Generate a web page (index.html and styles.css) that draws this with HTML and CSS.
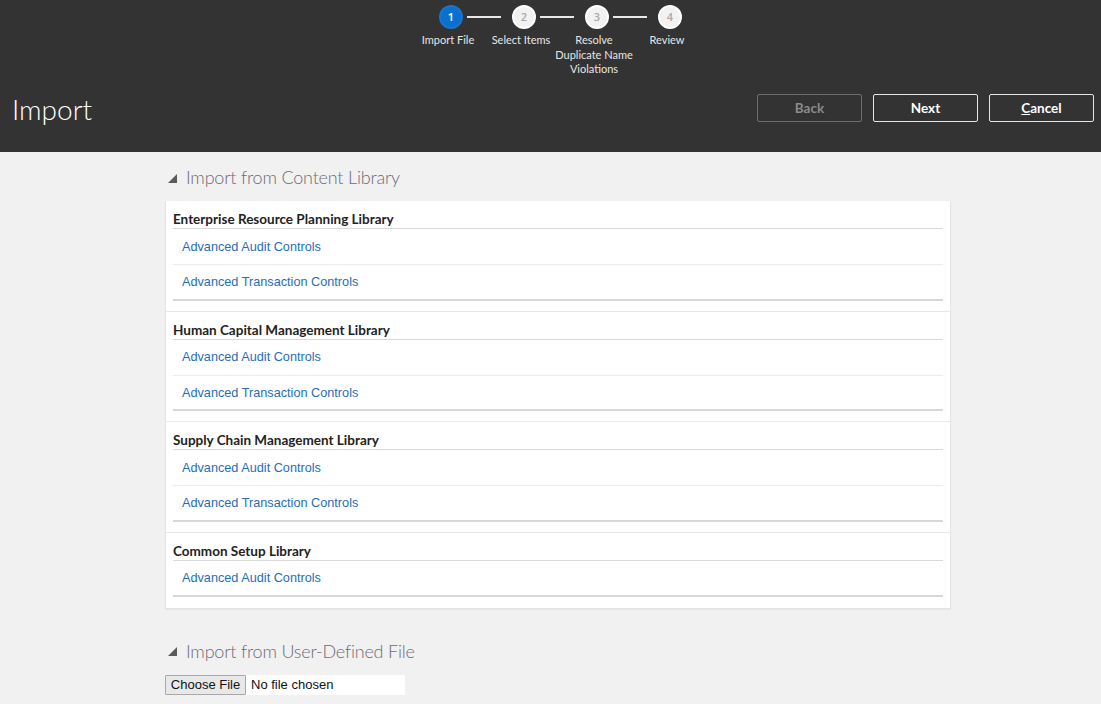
FILE: index.html
```html
<!DOCTYPE html>
<html>
<head>
<meta charset="utf-8">
<link rel="stylesheet" href="styles.css">
</head>
<body>
<header class="header">
  <div class="train">
    <div class="step active"><span class="dot">1</span><span class="label">Import File</span></div>
    <div class="step"><span class="dot">2</span><span class="label">Select Items</span></div>
    <div class="step"><span class="dot">3</span><span class="label">Resolve Duplicate Name Violations</span></div>
    <div class="step last"><span class="dot">4</span><span class="label">Review</span></div>
  </div>
  <div class="title-bar">
    <h1 class="title">Import</h1>
    <div class="actions">
      <button class="btn disabled">Back</button>
      <button class="btn">Next</button>
      <button class="btn"><u>C</u>ancel</button>
    </div>
  </div>
</header>
<main class="content">
  <h2 class="section-title"><span class="tri"></span>Import from Content Library</h2>
  <div class="panel">
    <div class="group">
      <div class="group-title">Enterprise Resource Planning Library</div>
      <div class="row"><a class="link">Advanced Audit Controls</a></div>
      <div class="row"><a class="link">Advanced Transaction Controls</a></div>
    </div>
    <div class="group">
      <div class="group-title">Human Capital Management Library</div>
      <div class="row"><a class="link">Advanced Audit Controls</a></div>
      <div class="row"><a class="link">Advanced Transaction Controls</a></div>
    </div>
    <div class="group">
      <div class="group-title">Supply Chain Management Library</div>
      <div class="row"><a class="link">Advanced Audit Controls</a></div>
      <div class="row"><a class="link">Advanced Transaction Controls</a></div>
    </div>
    <div class="group final">
      <div class="group-title">Common Setup Library</div>
      <div class="row"><a class="link">Advanced Audit Controls</a></div>
    </div>
  </div>
  <h2 class="section-title second"><span class="tri"></span>Import from User-Defined File</h2>
  <div class="file">
    <span class="file-btn">Choose File</span><span class="file-name">No file chosen</span>
  </div>
</main>
</body>
</html>
```
FILE: styles.css
```css
html, body {
  margin: 0;
  padding: 0;
  background: #f1f1f1;
  font-family: Lato, "Open Sans", sans-serif;
  overflow: hidden;
}
.header {
  background: #333333;
  height: 152px;
  box-sizing: border-box;
  padding-top: 5px;
}
.train {
  display: flex;
  justify-content: center;
  margin-left: 14px;
}
.step {
  width: 73px;
  position: relative;
  display: flex;
  flex-direction: column;
  align-items: center;
}
.step::after {
  content: "";
  position: absolute;
  top: 11px;
  left: calc(50% + 19px);
  width: 34px;
  height: 2px;
  background: #e8e8e8;
}
.step.last::after {
  display: none;
}
.dot {
  width: 20px;
  height: 20px;
  margin-left: 6px;
  border-radius: 50%;
  border: 2px solid #ffffff;
  background: #f2f2f2;
  color: #a8a8a8;
  font-family: "Open Sans", sans-serif;
  font-size: 11px;
  line-height: 20px;
  text-align: center;
  font-weight: 600;
}
.step.active .dot {
  background: #0a6fcf;
  border-color: #1a74cc;
  color: #ffffff;
}
.label {
  margin-top: 4px;
  font-size: 11px;
  line-height: 14.5px;
  color: #e6e6e6;
  text-align: center;
  width: 80px;
}
.title-bar {
  display: flex;
  align-items: center;
  justify-content: space-between;
  padding: 0 7px 0 12px;
  margin-top: 11px;
  height: 40px;
}
.title {
  margin: 0;
  font-size: 28px;
  font-weight: 300;
  color: #ffffff;
  position: relative;
  top: 1px;
}
.actions {
  display: flex;
  gap: 11px;
}
.btn {
  width: 105px;
  height: 28px;
  background: transparent;
  border: 1px solid #e6e6e6;
  border-radius: 2px;
  color: #ffffff;
  font-family: Lato, sans-serif;
  font-weight: 700;
  font-size: 13.5px;
  padding: 0;
}
.btn u {
  text-decoration: underline;
}
.btn.disabled {
  border-color: #6e6e6e;
  color: #8a8a8a;
}
.content {
  margin-left: 165px;
  width: 786px;
  padding-top: 13px;
}
.section-title {
  margin: 0 0 12px 0;
  height: 24px;
  display: flex;
  align-items: center;
  font-size: 18px;
  font-weight: 300;
  letter-spacing: -0.2px;
  color: #6f6a78;
}
.section-title.second {
  margin-top: 30px;
}
.tri {
  width: 0;
  height: 0;
  border-left: 9px solid transparent;
  border-bottom: 9px solid #5a5a5a;
  margin: 2px 9px 0 3px;
}
.panel {
  background: #ffffff;
  border: 1px solid #e4e4e4;
  border-top: 0;
  box-shadow: 0 1px 1px rgba(0,0,0,0.04);
}
.group {
  padding: 10px 7px 10px 7px;
  border-bottom: 1px solid #e8e8e8;
}
.group.final {
  border-bottom: none;
  padding-bottom: 11px;
}
.group-title {
  font-size: 13.5px;
  font-weight: 700;
  line-height: 17px;
  color: #222222;
  border-bottom: 1px solid #d9d9d9;
}
.row {
  height: 36px;
  box-sizing: border-box;
  border-bottom: 1px solid #ececec;
  display: flex;
  align-items: center;
  padding-left: 9px;
}
.row:last-child {
  height: 35.7px;
  border-bottom: 2px solid #d8d8d8;
}
.link {
  font-family: "Liberation Sans", Arial, sans-serif;
  font-size: 12.7px;
  color: #1f6eb6;
  text-decoration: none;
}
.file {
  display: flex;
  margin-top: 12px;
  height: 20px;
}
.file-btn {
  box-sizing: border-box;
  width: 81px;
  height: 20px;
  background: #e8e8e8;
  border: 1px solid #a9a9a9;
  border-radius: 1px;
  font-family: "Liberation Sans", Arial, sans-serif;
  font-size: 13px;
  line-height: 18px;
  text-align: center;
  color: #111111;
}
.file-name {
  box-sizing: border-box;
  width: 159px;
  height: 20px;
  background: #ffffff;
  padding-left: 5px;
  font-family: "Liberation Sans", Arial, sans-serif;
  font-size: 13px;
  line-height: 20px;
  color: #111111;
}
```
